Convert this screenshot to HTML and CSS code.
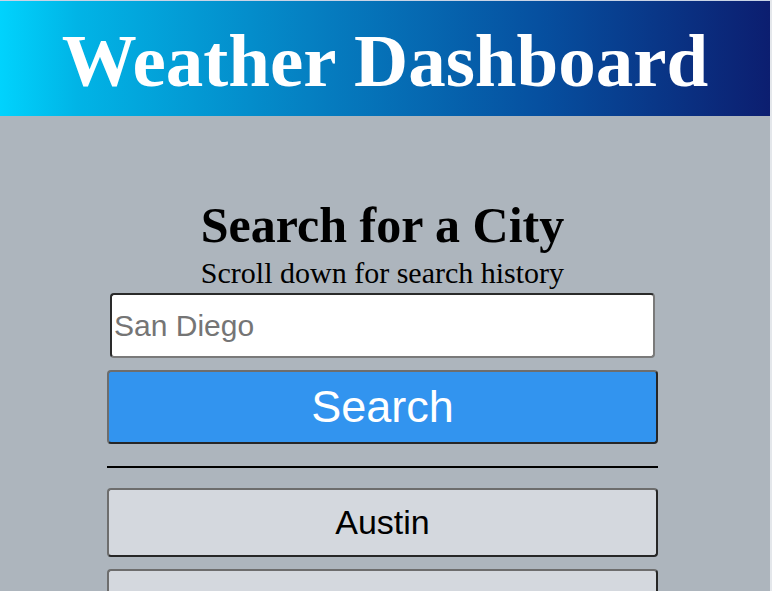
FILE: index.html
```html
<!DOCTYPE html>
<html lang="en">
<head>
<meta charset="utf-8">
<title>Weather Dashboard</title>
<link rel="stylesheet" href="styles.css">
</head>
<body>
<header class="banner">
  <h1 class="banner-title">Weather Dashboard</h1>
</header>
<main class="search-panel">
  <h2 class="search-heading">Search for a City</h2>
  <p class="search-hint">Scroll down for search history</p>
  <input class="city-input" type="text" placeholder="San Diego">
  <button class="search-btn" type="button">Search</button>
  <hr class="divider">
  <div class="history">
    <button class="history-btn" type="button">Austin</button>
    <button class="history-btn" type="button">Chicago</button>
  </div>
</main>
</body>
</html>
```

FILE: styles.css
```css
html {
  background: #e4e7eb;
}
body {
  margin: 0;
  margin-right: 2px;
  height: 591px;
  overflow: hidden;
  background: #adb5bd;
  border-top: 1px solid #c9d4e6;
  box-sizing: border-box;
}
.banner {
  height: 115px;
  box-sizing: border-box;
  padding-top: 22px;
  background: linear-gradient(to right, #00d3fd 0%, #01b4e6 10%, #0580c2 40%, #0650a0 70%, #0c1e70 100%);
}
.banner-title {
  margin: 0;
  font-family: "Liberation Serif", "Times New Roman", serif;
  font-weight: bold;
  font-size: 75px;
  line-height: 75px;
  color: #ffffff;
  text-align: center;
}
.search-panel {
  width: 551px;
  margin-left: 107px;
  padding-top: 84px;
  display: flex;
  flex-direction: column;
}
.search-heading {
  margin: 0;
  font-family: "Liberation Serif", "Times New Roman", serif;
  font-weight: bold;
  font-size: 50px;
  line-height: 50px;
  color: #000;
  text-align: center;
}
.search-hint {
  margin: 8px 0 0;
  font-family: "Liberation Serif", "Times New Roman", serif;
  font-size: 30px;
  line-height: 30px;
  color: #000;
  text-align: center;
}
.city-input {
  margin: 5px 3px 0;
  height: 65px;
  box-sizing: border-box;
  padding: 0 2px;
  font-family: "Liberation Sans", Arial, sans-serif;
  font-size: 30px;
  background: #fff;
  border: 2px solid;
  border-color: #2a2a2a #7a7a7a #7a7a7a #2a2a2a;
  border-radius: 4px;
  outline: none;
}
.city-input::placeholder {
  color: #757575;
}
.search-btn {
  margin-top: 12px;
  height: 74px;
  box-sizing: border-box;
  background: #3294ef;
  color: #fff;
  font-family: "Liberation Sans", Arial, sans-serif;
  font-size: 45px;
  border: 2px solid;
  border-color: #6d6d6d #262626 #262626 #6d6d6d;
  border-radius: 4px;
  padding: 0;
}
.divider {
  margin: 22px 0 0;
  height: 0;
  border: 0;
  border-top: 2px solid #000;
}
.history {
  margin-top: 20px;
  display: flex;
  flex-direction: column;
  gap: 12px;
}
.history-btn {
  height: 69px;
  box-sizing: border-box;
  background: #d4d8de;
  color: #000;
  font-family: "Liberation Sans", Arial, sans-serif;
  font-size: 34px;
  border: 2px solid;
  border-color: #6d6d6d #262626 #262626 #6d6d6d;
  border-radius: 4px;
  padding: 0;
}
```
